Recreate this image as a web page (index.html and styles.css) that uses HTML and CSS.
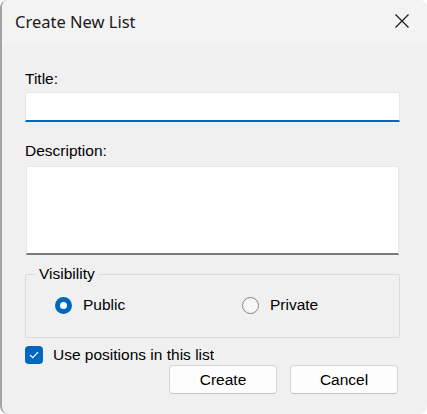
FILE: index.html
```html
<!DOCTYPE html>
<html>
<head>
<meta charset="utf-8">
<link rel="stylesheet" href="styles.css">
</head>
<body>
<div class="window">
  <div class="titlebar">
    <span class="title">Create New List</span>
    <svg class="close" width="14" height="14" viewBox="0 0 14 14"><path d="M0.5 0.5 L13.5 13.5 M13.5 0.5 L0.5 13.5" stroke="#1a1a1a" stroke-width="1.2" fill="none"/></svg>
  </div>
  <div class="content">
    <div class="label label-title">Title:</div>
    <div class="input"></div>
    <div class="label label-desc">Description:</div>
    <div class="textarea"></div>
    <div class="group">
      <span class="legend">Visibility</span>
      <div class="radios">
        <div class="radio-item"><span class="radio checked"></span><span>Public</span></div>
        <div class="radio-item private"><span class="radio"></span><span>Private</span></div>
      </div>
    </div>
    <div class="check-row">
      <span class="checkbox"><svg width="10" height="8" viewBox="0 0 10 8"><path d="M1 4 L3.8 6.6 L9 1.2" stroke="#fff" stroke-width="1.2" fill="none"/></svg></span>
      <span>Use positions in this list</span>
    </div>
    <div class="buttons">
      <div class="btn">Create</div>
      <div class="btn">Cancel</div>
    </div>
  </div>
</div>
</body>
</html>
```

FILE: styles.css
```css
html, body {
  margin: 0;
  padding: 0;
  background: #ffffff;
}
.window {
  width: 427px;
  height: 414px;
  box-sizing: border-box;
  background: #f0f0f0;
  border-left: 2px solid #a3a3a3;
  border-radius: 8px;
  overflow: hidden;
  font-family: "Liberation Sans", Arial, sans-serif;
  font-size: 15.5px;
  color: #000;
}
.titlebar {
  height: 45px;
  background: #f3f3f3;
  display: flex;
  align-items: center;
  justify-content: space-between;
  padding: 0 18px 0 13px;
}
.title {
  font-family: "Noto Sans", sans-serif;
  font-size: 16.5px;
  color: #1a1a1a;
  margin-top: -2px;
}
.close {
  margin-top: -3px;
}
.content {
  padding: 0 27px 0 23px;
}
.label {
  line-height: 18px;
}
.label-title {
  padding-top: 25px;
}
.input {
  margin-top: 4px;
  height: 27px;
  background: #fff;
  border: 1px solid #e6e6e6;
  border-bottom: 2px solid #0067c0;
  border-radius: 2px 2px 0 0;
}
.label-desc {
  margin-top: 20px;
}
.textarea {
  margin: 6px 1px 0 1px;
  height: 86px;
  background: #fff;
  border: 1px solid #e8e8e8;
  border-bottom: 2px solid #7a7a7a;
}
.group {
  margin-top: 19px;
  height: 62px;
  border: 1px solid #dcdcdc;
  border-radius: 2px;
  position: relative;
}
.legend {
  position: absolute;
  left: 10px;
  top: -10px;
  background: #f0f0f0;
  padding: 0 3px;
  line-height: 18px;
}
.radios {
  display: flex;
  padding: 21px 0 0 29px;
}
.radio-item {
  display: flex;
  align-items: center;
  gap: 11px;
  width: 187px;
  flex-shrink: 0;
}
.radio {
  width: 17px;
  height: 17px;
  border-radius: 50%;
  border: 1px solid #858585;
  background: #f7f7f7;
  box-sizing: border-box;
}
.radio.checked {
  border: 5.5px solid #0067c0;
  background: #fff;
}
.check-row {
  margin-top: 8px;
  display: flex;
  align-items: center;
  gap: 10px;
}
.checkbox {
  width: 18px;
  height: 18px;
  border-radius: 4px;
  background: #0067c0;
  display: flex;
  align-items: center;
  justify-content: center;
}
.buttons {
  display: flex;
  justify-content: flex-end;
  gap: 13px;
  margin: 1px 2px 0 0;
}
.btn {
  width: 108px;
  height: 29px;
  box-sizing: border-box;
  background: #fdfdfd;
  border: 1px solid #d5d5d5;
  border-bottom-color: #c4c4c4;
  border-radius: 4px;
  display: flex;
  align-items: center;
  justify-content: center;
  font-size: 15.5px;
}
```
